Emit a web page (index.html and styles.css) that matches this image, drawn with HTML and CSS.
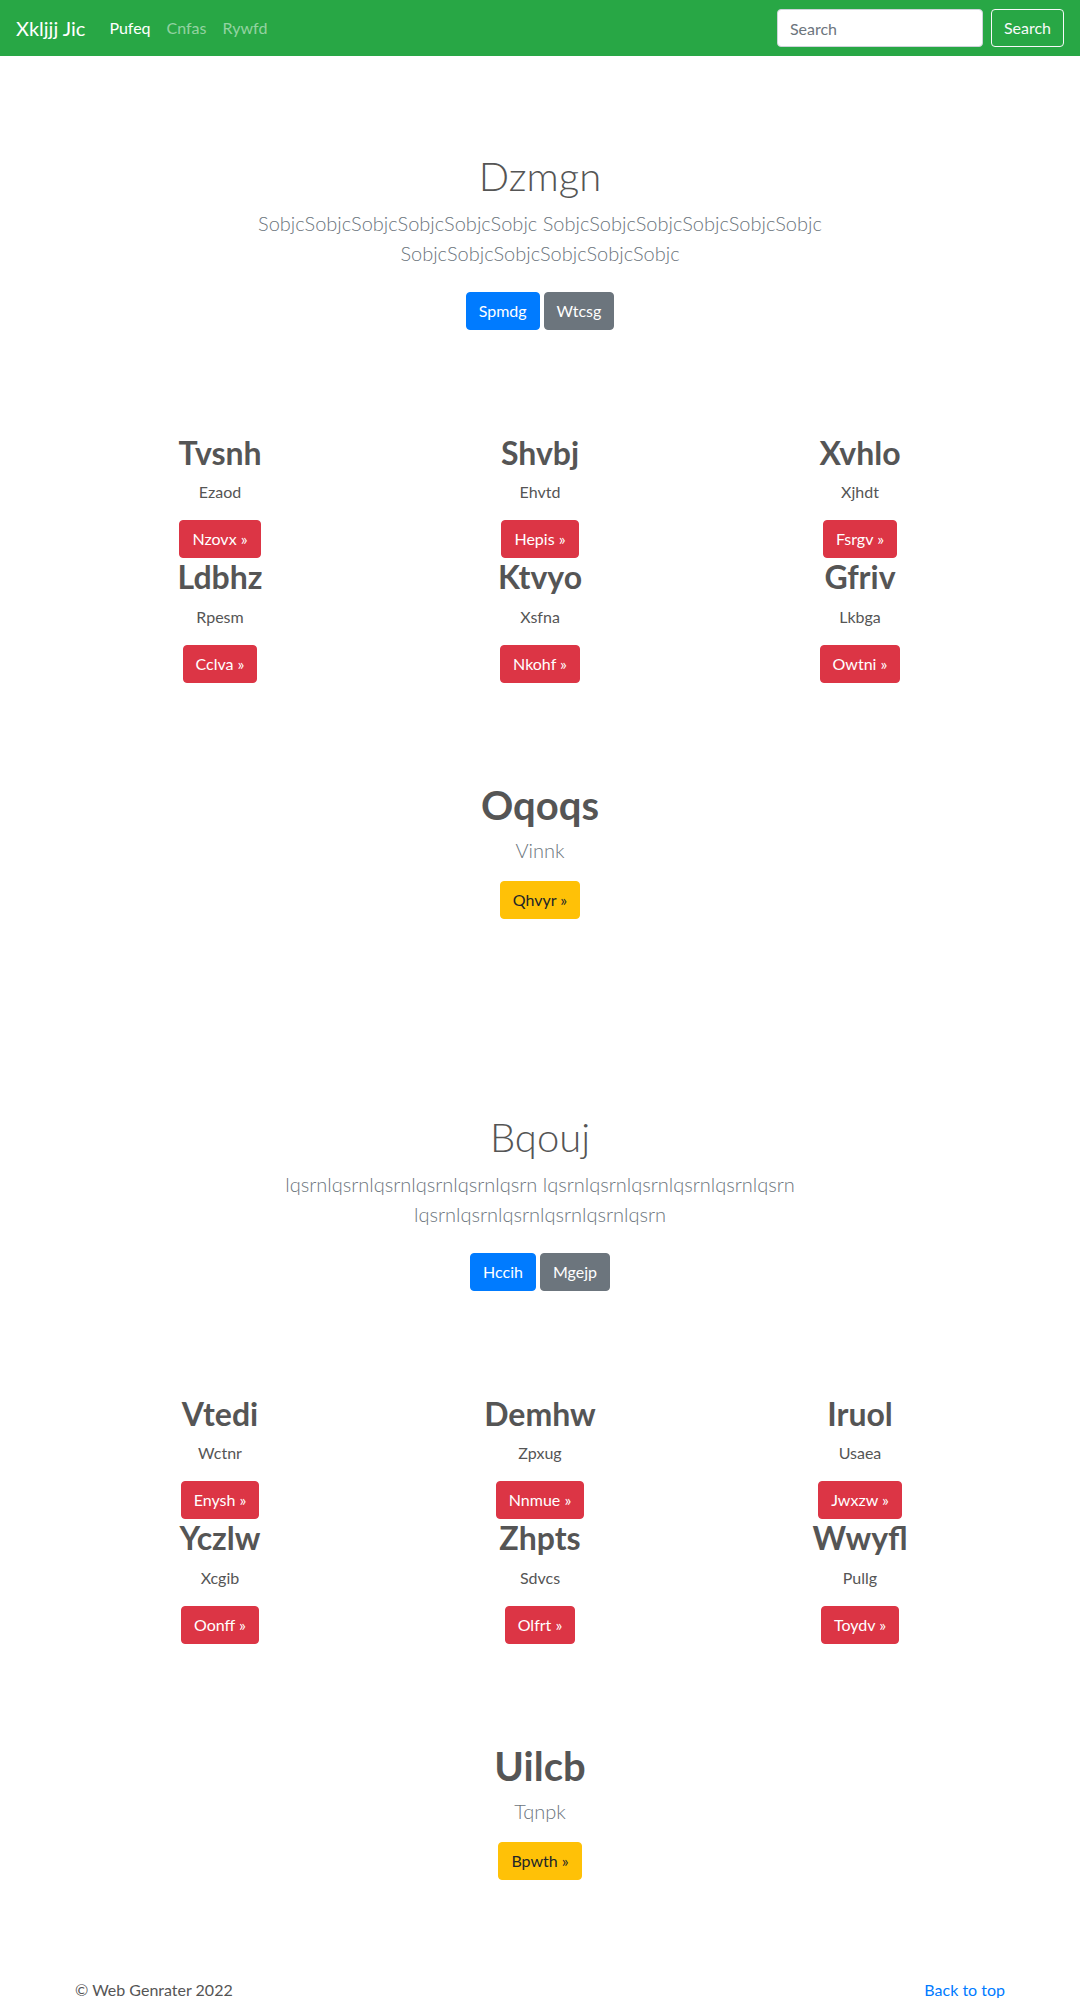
FILE: index.html
```html
<!DOCTYPE html>
<html lang="en">
<head>
<meta charset="utf-8">
<title>Xkljjj Jic</title>
<link rel="stylesheet" href="styles.css">
</head>
<body>
<header class="navbar">
  <div class="nav-left">
    <a class="brand" href="#">Xkljjj Jic</a>
    <nav class="nav-links">
      <a class="nav-link active" href="#">Pufeq</a>
      <a class="nav-link" href="#">Cnfas</a>
      <a class="nav-link" href="#">Rywfd</a>
    </nav>
  </div>
  <form class="nav-search">
    <input class="search-input" type="text" placeholder="Search">
    <button class="btn btn-outline-light" type="button">Search</button>
  </form>
</header>

<main>
  <section class="hero">
    <h1 class="hero-title">Dzmgn</h1>
    <p class="lead hero-lead">SobjcSobjcSobjcSobjcSobjcSobjc SobjcSobjcSobjcSobjcSobjcSobjc SobjcSobjcSobjcSobjcSobjcSobjc</p>
    <div class="hero-actions">
      <a class="btn btn-primary" href="#">Spmdg</a>
      <a class="btn btn-secondary" href="#">Wtcsg</a>
    </div>
  </section>

  <section class="features">
    <div class="feature-grid">
      <div class="feature"><h2 class="feature-title">Tvsnh</h2><p class="feature-text">Ezaod</p><a class="btn btn-danger" href="#">Nzovx &raquo;</a></div>
      <div class="feature"><h2 class="feature-title">Shvbj</h2><p class="feature-text">Ehvtd</p><a class="btn btn-danger" href="#">Hepis &raquo;</a></div>
      <div class="feature"><h2 class="feature-title">Xvhlo</h2><p class="feature-text">Xjhdt</p><a class="btn btn-danger" href="#">Fsrgv &raquo;</a></div>
      <div class="feature"><h2 class="feature-title">Ldbhz</h2><p class="feature-text">Rpesm</p><a class="btn btn-danger" href="#">Cclva &raquo;</a></div>
      <div class="feature"><h2 class="feature-title">Ktvyo</h2><p class="feature-text">Xsfna</p><a class="btn btn-danger" href="#">Nkohf &raquo;</a></div>
      <div class="feature"><h2 class="feature-title">Gfriv</h2><p class="feature-text">Lkbga</p><a class="btn btn-danger" href="#">Owtni &raquo;</a></div>
    </div>
  </section>

  <section class="promo">
    <h1 class="promo-title">Oqoqs</h1>
    <p class="lead promo-lead">Vinnk</p>
    <a class="btn btn-warning" href="#">Qhvyr &raquo;</a>
  </section>

  <section class="hero">
    <h1 class="hero-title">Bqouj</h1>
    <p class="lead hero-lead">lqsrnlqsrnlqsrnlqsrnlqsrnlqsrn lqsrnlqsrnlqsrnlqsrnlqsrnlqsrn lqsrnlqsrnlqsrnlqsrnlqsrnlqsrn</p>
    <div class="hero-actions">
      <a class="btn btn-primary" href="#">Hccih</a>
      <a class="btn btn-secondary" href="#">Mgejp</a>
    </div>
  </section>

  <section class="features">
    <div class="feature-grid">
      <div class="feature"><h2 class="feature-title">Vtedi</h2><p class="feature-text">Wctnr</p><a class="btn btn-danger" href="#">Enysh &raquo;</a></div>
      <div class="feature"><h2 class="feature-title">Demhw</h2><p class="feature-text">Zpxug</p><a class="btn btn-danger" href="#">Nnmue &raquo;</a></div>
      <div class="feature"><h2 class="feature-title">Iruol</h2><p class="feature-text">Usaea</p><a class="btn btn-danger" href="#">Jwxzw &raquo;</a></div>
      <div class="feature"><h2 class="feature-title">Yczlw</h2><p class="feature-text">Xcgib</p><a class="btn btn-danger" href="#">Oonff &raquo;</a></div>
      <div class="feature"><h2 class="feature-title">Zhpts</h2><p class="feature-text">Sdvcs</p><a class="btn btn-danger" href="#">Olfrt &raquo;</a></div>
      <div class="feature"><h2 class="feature-title">Wwyfl</h2><p class="feature-text">Pullg</p><a class="btn btn-danger" href="#">Toydv &raquo;</a></div>
    </div>
  </section>

  <section class="promo">
    <h1 class="promo-title">Uilcb</h1>
    <p class="lead promo-lead">Tqnpk</p>
    <a class="btn btn-warning" href="#">Bpwth &raquo;</a>
  </section>
</main>

<footer class="footer">
  <div class="footer-inner">
    <p class="copyright">&copy; Web Genrater 2022</p>
    <a class="back-top" href="#">Back to top</a>
  </div>
</footer>
</body>
</html>
```
FILE: styles.css
```css
* { box-sizing: border-box; }

body {
  margin: 0;
  font-family: Lato, "Open Sans", "Liberation Sans", sans-serif;
  font-size: 16px;
  line-height: 1.5;
  color: #555;
  background: #fff;
}

a { text-decoration: none; }
h1, h2, p { margin: 0; }

/* Navbar */
.navbar {
  height: 56px;
  background: #28a745;
  padding: 8px 16px;
  display: flex;
  align-items: center;
  justify-content: space-between;
}
.nav-left { display: flex; align-items: center; }
.brand {
  color: #fff;
  font-size: 20px;
  line-height: 30px;
  margin-right: 16px;
}
.nav-links { display: flex; }
.nav-link {
  padding: 8px;
  color: rgba(255, 255, 255, 0.5);
  line-height: 24px;
}
.nav-link.active { color: #fff; }

.nav-search { display: flex; align-items: center; }
.search-input {
  width: 206px;
  height: 38px;
  padding: 6px 12px;
  font: inherit;
  color: #495057;
  border: 1px solid #ced4da;
  border-radius: 4px;
  margin-right: 8px;
  background: #fff;
}
.search-input::placeholder { color: #6c757d; }

/* Buttons */
.btn {
  display: inline-block;
  font-family: inherit;
  font-size: 16px;
  line-height: 24px;
  padding: 6px 12px;
  border: 1px solid transparent;
  border-radius: 4px;
  color: #fff;
  text-align: center;
  background: transparent;
}
.btn-outline-light { color: #f8f9fa; border-color: #f8f9fa; }
.btn-primary { background: #007bff; border-color: #007bff; }
.btn-secondary { background: #6c757d; border-color: #6c757d; }
.btn-danger { background: #dc3545; border-color: #dc3545; }
.btn-warning { background: #ffc107; border-color: #ffc107; color: #212529; }

/* Hero */
.hero {
  padding: 96px 15px 48px;
  text-align: center;
}
.hero-title {
  font-size: 40px;
  font-weight: 300;
  line-height: 1.2;
  margin-bottom: 8px;
  color: #555;
}
.lead {
  font-size: 20px;
  font-weight: 300;
  line-height: 30px;
  color: #6c757d;
}
.hero-lead {
  max-width: 610px;
  margin: 0 auto 16px;
}
.hero-actions {
  display: flex;
  justify-content: center;
  gap: 4px;
  padding: 8px 0;
  margin-bottom: 16px;
}

/* Features */
.features { padding: 32px 0 48px; }
.feature-grid {
  width: 960px;
  margin: 0 auto;
  display: grid;
  grid-template-columns: repeat(3, 1fr);
}
.feature {
  padding: 0 15px;
  text-align: center;
}
.feature-title {
  font-size: 32px;
  font-weight: 700;
  line-height: 1.2;
  margin-bottom: 8px;
  color: #555;
}
.feature-text { margin-bottom: 16px; }

/* Promo */
.promo {
  padding: 50px 15px 98px;
  text-align: center;
}
.promo-title {
  font-size: 40px;
  font-weight: 700;
  line-height: 1.2;
  margin-bottom: 6px;
  color: #555;
}
.promo-lead { margin-bottom: 16px; }

/* Footer */
.footer { padding: 0 0 48px; }
.footer-inner {
  width: 960px;
  margin: 0 auto;
  padding: 0 15px;
  display: flex;
  justify-content: space-between;
}
.copyright { color: #555; }
.back-top { color: #007bff; }
```
